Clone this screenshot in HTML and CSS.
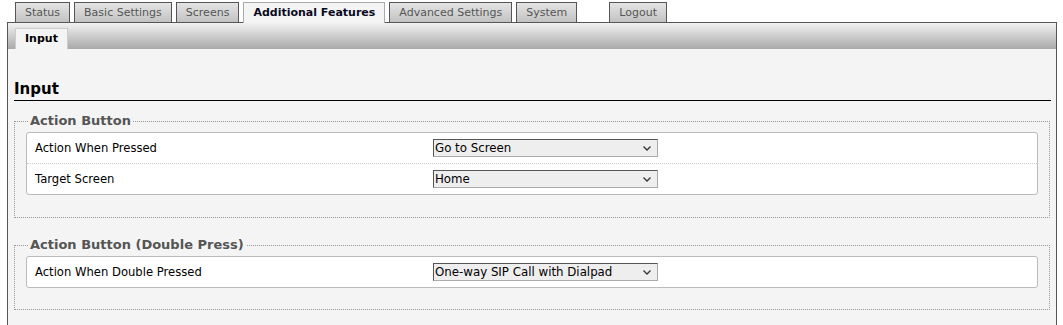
FILE: index.html
```html
<!DOCTYPE html>
<html lang="en">
<head>
    <meta charset="UTF-8">
    <meta name="viewport" content="width=device-width, initial-scale=1.0">
    <title>Additional Features - Input</title>
    <link rel="stylesheet" href="styles.css">
</head>
<body>
    <div class="page">
        <ul class="tabs">
            <li class="tab">Status</li>
            <li class="tab">Basic Settings</li>
            <li class="tab">Screens</li>
            <li class="tab active">Additional Features</li>
            <li class="tab">Advanced Settings</li>
            <li class="tab">System</li>
            <li class="tab logout">Logout</li>
        </ul>
        <div class="panel">
            <div class="subbar">
                <span class="subtab">Input</span>
            </div>
            <div class="content">
                <h2 class="heading">Input</h2>

                <fieldset class="group">
                    <legend>Action Button</legend>
                    <div class="settings">
                        <div class="row">
                            <span class="label">Action When Pressed</span>
                            <span class="select-wrap">
                                <select class="field">
                                    <option>Go to Screen</option>
                                </select>
                                <svg class="chevron" width="8" height="5" viewBox="0 0 8 5"><polyline points="0.5,0.5 4,4 7.5,0.5" fill="none" stroke="#333" stroke-width="1.3"/></svg>
                            </span>
                        </div>
                        <div class="row">
                            <span class="label">Target Screen</span>
                            <span class="select-wrap">
                                <select class="field">
                                    <option>Home</option>
                                </select>
                                <svg class="chevron" width="8" height="5" viewBox="0 0 8 5"><polyline points="0.5,0.5 4,4 7.5,0.5" fill="none" stroke="#333" stroke-width="1.3"/></svg>
                            </span>
                        </div>
                    </div>
                </fieldset>

                <fieldset class="group last">
                    <legend>Action Button (Double Press)</legend>
                    <div class="settings">
                        <div class="row">
                            <span class="label">Action When Double Pressed</span>
                            <span class="select-wrap">
                                <select class="field">
                                    <option>One-way SIP Call with Dialpad</option>
                                </select>
                                <svg class="chevron" width="8" height="5" viewBox="0 0 8 5"><polyline points="0.5,0.5 4,4 7.5,0.5" fill="none" stroke="#333" stroke-width="1.3"/></svg>
                            </span>
                        </div>
                    </div>
                </fieldset>
            </div>
        </div>
    </div>
</body>
</html>
```

FILE: styles.css
```css
body {
    margin: 0;
    font-family: "DejaVu Sans", Verdana, sans-serif;
    background-color: #ffffff;
    color: #000;
}
.page {
    width: 1050px;
    margin: 2px 0 0 7px;
}
.tabs {
    display: flex;
    align-items: flex-end;
    list-style: none;
    margin: 0;
    padding: 0 0 0 8px;
    border-bottom: 1px solid #555;
    height: 20px;
}
.tab {
    height: 19px;
    line-height: 19px;
    padding: 0 9px;
    margin-right: 4px;
    font-size: 11px;
    color: #555;
    border: 1px solid #555;
    border-bottom: none;
    background: linear-gradient(#e4e4e4, #c2c2c2);
}
.tab.active {
    height: 20px;
    margin-bottom: -1px;
    font-weight: bold;
    color: #0a0a1e;
    border-color: #aaa;
    background: #f4f4f4;
}
.tab.logout {
    margin-left: 28px;
}
.panel {
    border-left: 1px solid #555;
    border-right: 1px solid #555;
    background-color: #f4f4f4;
    height: 302px;
}
.subbar {
    display: flex;
    align-items: flex-end;
    height: 26px;
    padding-left: 7px;
    background: linear-gradient(#f2f2f2, #a9a9a9);
}
.subtab {
    height: 20px;
    line-height: 20px;
    padding: 0 9px;
    font-size: 11px;
    font-weight: bold;
    border: 1px solid #ccc;
    border-bottom: none;
    background: #f4f4f4;
}
.content {
    padding: 0 5px 0 6px;
}
.heading {
    margin: 30px 0 0 0;
    font-size: 15px;
    line-height: 20px;
    font-weight: bold;
    border-bottom: 1px solid #000;
    padding-bottom: 1px;
}
.group {
    margin: 12px 1px 0 0;
    padding: 3px 11px 22px 11px;
    border: 1px dotted #999;
}
.group + .group {
    margin-top: 19px;
}
.group.last {
    padding-bottom: 21px;
}
.group legend {
    margin-left: 2px;
    padding: 0 2px;
    font-size: 13px;
    line-height: 16px;
    font-weight: bold;
    color: #555;
}
.settings {
    background-color: #fff;
    border: 1px solid #bbb;
    border-radius: 3px;
}
.row {
    display: grid;
    grid-template-columns: 406px 225px;
    align-items: center;
    height: 30px;
    border-bottom: 1px dotted #ccc;
}
.row:last-child {
    border-bottom: none;
}
.label {
    padding-left: 8px;
    font-size: 11.6px;
}
.select-wrap {
    position: relative;
    display: flex;
}
.field {
    appearance: none;
    -webkit-appearance: none;
    width: 225px;
    height: 18px;
    padding: 0 0 0 1px;
    font-family: "DejaVu Sans", Verdana, sans-serif;
    font-size: 11.8px;
    color: #000;
    background-color: #eee;
    border: 1px solid #aaa;
    border-top-color: #555;
    border-left-color: #555;
    border-radius: 0;
    outline: none;
}
.chevron {
    position: absolute;
    right: 7px;
    top: 7px;
    pointer-events: none;
}
```
